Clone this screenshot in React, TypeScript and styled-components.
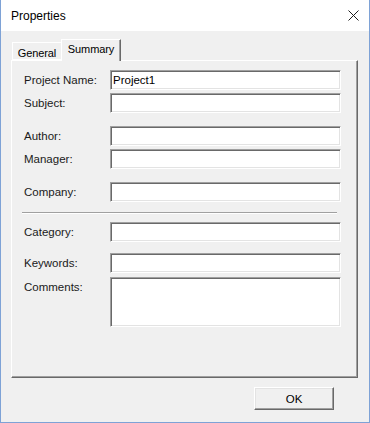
import React from "react";
import styled, { createGlobalStyle } from "styled-components";

//=========================
// 	     GLOBAL
//=========================

const GlobalStyle = createGlobalStyle`
    html, body {
        margin: 0;
        padding: 0;
        width: 370px;
        height: 423px;
        overflow: hidden;
        background: #f0f0f0;
    }
    * {
        box-sizing: border-box;
    }
`;

const UI_FONT = `"Liberation Sans", Arial, sans-serif`;

//=========================
// 	     WINDOW
//=========================

const DialogWindow = styled.div`
    width: 370px;
    height: 423px;
    display: flex;
    flex-direction: column;
    border: 1px solid #7ea2d6;
    border-top: none;
    background: #f0f0f0;
    font-family: ${UI_FONT};
    color: #000;
`;

const TitleBar = styled.div`
    height: 31px;
    flex: none;
    display: flex;
    align-items: center;
    justify-content: space-between;
    padding: 0 10px 0 10px;
    background: #ffffff;
`;

const TitleText = styled.span`
    font-size: 12px;
    margin-top: 1px;
`;

const CloseButton = styled.button`
    width: 12px;
    height: 12px;
    padding: 0;
    margin: 0;
    border: none;
    background: transparent;
    display: flex;
    align-items: center;
    justify-content: center;
`;

const DialogBody = styled.div`
    flex: 1;
    display: flex;
    flex-direction: column;
    padding: 8px 11px 0 10px;
`;

//=========================
// 	      TABS
//=========================

const TabStrip = styled.div`
    height: 21px;
    display: flex;
    align-items: flex-end;
    padding-left: 1px;
`;

const Tab = styled.div<{ $active?: boolean; $width: number }>`
    position: relative;
    width: ${(p) => p.$width}px;
    height: ${(p) => (p.$active ? "22px" : "18px")};
    margin-bottom: ${(p) => (p.$active ? "-1px" : "0")};
    margin-left: ${(p) => (p.$active ? "-1px" : "0")};
    z-index: ${(p) => (p.$active ? 1 : 0)};
    padding-top: ${(p) => (p.$active ? "3px" : "4px")};
    text-align: center;
    white-space: nowrap;
    background: #f0f0f0;
    border: 1px solid;
    border-color: #ffffff #696969 transparent #ffffff;
    border-bottom: ${(p) => (p.$active ? "none" : "1px solid #ffffff")};
    box-shadow: ${(p) => (p.$active ? "inset -1px 0 0 #a0a0a0" : "none")};
    font-size: 11px;
    line-height: 13px;
    letter-spacing: -0.1px;
`;

const Panel = styled.div`
    height: 318px;
    border: 1px solid;
    border-color: #ffffff #696969 #696969 #ffffff;
    box-shadow: inset -1px -1px 0 #a0a0a0;
    padding: 9px 0 0 12px;
`;

//=========================
// 	      FORM
//=========================

const FieldRow = styled.div<{ $gap?: number }>`
    display: grid;
    grid-template-columns: 86px 231px;
    margin-top: ${(p) => p.$gap ?? 0}px;
`;

const FieldLabel = styled.label`
    align-self: start;
    font-size: 11.5px;
    line-height: 20px;
    color: #1a1a1a;
`;

const TextBox = styled.input`
    width: 231px;
    height: 20px;
    margin: 0;
    padding: 0 2px;
    border: 1px solid;
    border-color: #a0a0a0 #ffffff #ffffff #a0a0a0;
    box-shadow: inset 1px 1px 0 #696969, inset -1px -1px 0 #e3e3e3;
    background: #ffffff;
    font-family: ${UI_FONT};
    font-size: 11.5px;
    color: #000;
    outline: none;
`;

const TextArea = styled.textarea`
    width: 231px;
    height: 50px;
    margin: 0;
    padding: 1px 2px;
    resize: none;
    border: 1px solid;
    border-color: #a0a0a0 #ffffff #ffffff #a0a0a0;
    box-shadow: inset 1px 1px 0 #696969, inset -1px -1px 0 #e3e3e3;
    background: #ffffff;
    font-family: ${UI_FONT};
    font-size: 11.5px;
    outline: none;
    display: block;
`;

const Separator = styled.div`
    width: 315px;
    height: 2px;
    margin: 10px 0 8px -2px;
    border-top: 1px solid #a0a0a0;
    border-bottom: 1px solid #ffffff;
`;

//=========================
// 	     FOOTER
//=========================

const Footer = styled.div`
    display: flex;
    justify-content: flex-end;
    padding: 9px 24px 0 0;
`;

const PushButton = styled.button`
    width: 80px;
    height: 23px;
    padding: 0;
    border: 1px solid;
    border-color: #ffffff #696969 #696969 #ffffff;
    box-shadow: inset -1px -1px 0 #a0a0a0, inset 1px 1px 0 #e3e3e3;
    background: #f0f0f0;
    font-family: ${UI_FONT};
    font-size: 11.5px;
    color: #000;
`;

const CloseIcon = () => (
    <svg width="11" height="11" viewBox="0 0 11 11">
        <path d="M0.5 0.5 L10.5 10.5 M10.5 0.5 L0.5 10.5" stroke="#1e1e1e" strokeWidth="1" fill="none" />
    </svg>
);

const fields = [
    { label: "Project Name:", value: "Project1", gap: 0 },
    { label: "Subject:", value: "", gap: 3 },
    { label: "Author:", value: "", gap: 13 },
    { label: "Manager:", value: "", gap: 3 },
    { label: "Company:", value: "", gap: 13 },
];

export default function App() {
    return (
        <>
            <GlobalStyle />
            <DialogWindow>
                <TitleBar>
                    <TitleText>Properties</TitleText>
                    <CloseButton aria-label="Close">
                        <CloseIcon />
                    </CloseButton>
                </TitleBar>
                <DialogBody>
                    <TabStrip>
                        <Tab $width={50}>General</Tab>
                        <Tab $active $width={60}>
                            Summary
                        </Tab>
                    </TabStrip>
                    <Panel>
                        {fields.map((f) => (
                            <FieldRow key={f.label} $gap={f.gap}>
                                <FieldLabel>{f.label}</FieldLabel>
                                <TextBox defaultValue={f.value} />
                            </FieldRow>
                        ))}
                        <Separator />
                        <FieldRow>
                            <FieldLabel>Category:</FieldLabel>
                            <TextBox defaultValue="" />
                        </FieldRow>
                        <FieldRow $gap={11}>
                            <FieldLabel>Keywords:</FieldLabel>
                            <TextBox defaultValue="" />
                        </FieldRow>
                        <FieldRow $gap={4}>
                            <FieldLabel>Comments:</FieldLabel>
                            <TextArea defaultValue="" />
                        </FieldRow>
                    </Panel>
                    <Footer>
                        <PushButton>OK</PushButton>
                    </Footer>
                </DialogBody>
            </DialogWindow>
        </>
    );
}
